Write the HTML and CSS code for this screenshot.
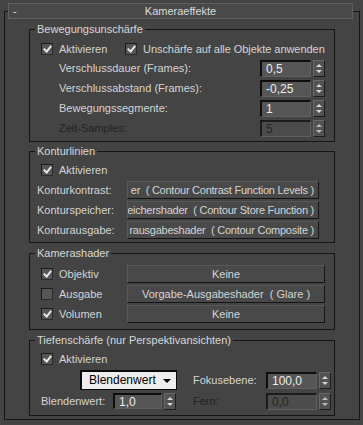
FILE: index.html
```html
<!DOCTYPE html>
<html>
<head>
    <meta charset="utf-8">
    <link rel="stylesheet" href="styles.css">
</head>
<body>
<div class="rollout">
    <div class="rollout-head">
        <span class="minus">-</span>
        <span class="rollout-title">Kameraeffekte</span>
        <span></span>
    </div>
    <div class="rollout-frame">

        <fieldset class="group group-blur">
            <legend>Bewegungsunschärfe</legend>
            <div class="group-body">
                <div class="row check-row">
                    <label class="check check-first"><span class="box on"></span>Aktivieren</label>
                    <label class="check"><span class="box on"></span>Unschärfe auf alle Objekte anwenden</label>
                </div>
                <div class="row field-row">
                    <span class="field-label">Verschlussdauer (Frames):</span>
                    <span class="num">0,5</span><span class="spin"></span>
                </div>
                <div class="row field-row">
                    <span class="field-label">Verschlussabstand (Frames):</span>
                    <span class="num">-0,25</span><span class="spin"></span>
                </div>
                <div class="row field-row">
                    <span class="field-label">Bewegungssegmente:</span>
                    <span class="num">1</span><span class="spin"></span>
                </div>
                <div class="row field-row disabled">
                    <span class="field-label">Zeit-Samples:</span>
                    <span class="num">5</span><span class="spin"></span>
                </div>
            </div>
        </fieldset>

        <fieldset class="group group-contour">
            <legend>Konturlinien</legend>
            <div class="group-body">
                <div class="row check-row">
                    <label class="check"><span class="box on"></span>Aktivieren</label>
                </div>
                <div class="row shader-row">
                    <span class="shader-label">Konturkontrast:</span>
                    <span class="btn clip"><span>er&nbsp; ( Contour Contrast Function Levels )</span></span>
                </div>
                <div class="row shader-row">
                    <span class="shader-label">Konturspeicher:</span>
                    <span class="btn clip"><span>eichershader&nbsp; ( Contour Store Function )</span></span>
                </div>
                <div class="row shader-row">
                    <span class="shader-label">Konturausgabe:</span>
                    <span class="btn clip"><span>rausgabeshader&nbsp; ( Contour Composite )</span></span>
                </div>
            </div>
        </fieldset>

        <fieldset class="group group-camera">
            <legend>Kamerashader</legend>
            <div class="group-body">
                <div class="row cam-row">
                    <label class="check cam-check"><span class="box on"></span>Objektiv</label>
                    <span class="btn">Keine</span>
                </div>
                <div class="row cam-row">
                    <label class="check cam-check"><span class="box"></span>Ausgabe</label>
                    <span class="btn">Vorgabe-Ausgabeshader&nbsp; ( Glare )</span>
                </div>
                <div class="row cam-row">
                    <label class="check cam-check"><span class="box on"></span>Volumen</label>
                    <span class="btn">Keine</span>
                </div>
            </div>
        </fieldset>

        <fieldset class="group group-dof">
            <legend>Tiefenschärfe (nur Perspektivansichten)</legend>
            <div class="group-body">
                <div class="row check-row">
                    <label class="check"><span class="box on"></span>Aktivieren</label>
                </div>
                <div class="dof-grid">
                    <div class="dof-cell dof-drop">
                        <span class="dropdown">Blendenwert<span class="caret"></span></span>
                    </div>
                    <div class="dof-cell">
                        <span class="dof-label">Fokusebene:</span>
                        <span class="num num-wide">100,0</span><span class="spin"></span>
                    </div>
                    <div class="dof-cell dof-left">
                        <span class="dof-label">Blendenwert:</span>
                        <span class="num num-small">1,0</span><span class="spin"></span>
                    </div>
                    <div class="dof-cell disabled">
                        <span class="dof-label">Fern:</span>
                        <span class="num num-wide">0,0</span><span class="spin"></span>
                    </div>
                </div>
            </div>
        </fieldset>

    </div>
</div>
</body>
</html>
```

FILE: styles.css
```css
* {
    margin: 0;
    padding: 0;
    box-sizing: border-box;
}

body {
    background: #444444;
    color: #d4d4d4;
    font-family: "Liberation Sans", Arial, sans-serif;
    font-size: 11px;
    line-height: 13px;
}

.rollout {
    padding-top: 3px;
}

/* title bar sits over the top edge of the frame */
.rollout-head {
    position: relative;
    z-index: 1;
    margin: 0 10px 0 8px;
    height: 16px;
    border: 1px solid #5f5f5f;
    background: #494949;
    display: grid;
    grid-template-columns: 1fr auto 1fr;
    align-items: center;
    color: #dcdcdc;
}

.minus {
    padding-left: 4px;
}

.rollout-frame {
    margin: -8px 3px 0 4px;
    border: 1px solid #161616;
    padding: 11px 0 3px;
}

/* group boxes */
.group {
    border: 1px solid #151515;
    margin: 0 24px;
    padding: 0;
    min-width: 0;
}

.group legend {
    margin-left: 5px;
    padding: 0 2px;
    line-height: 13px;
    color: #d8d8d8;
}

.group-contour { margin-top: 3px; }
.group-camera { margin-top: 4px; }
.group-dof { margin-top: 4px; }

.group-blur .group-body { padding: 4px 9px 3px 0; }
.group-contour .group-body { padding: 2px 15px 2px 0; }
.group-camera .group-body { padding: 4px 9px 5px 0; }
.group-dof .group-body { padding: 2px 3px 4px 0; }

.row {
    display: flex;
    align-items: center;
    height: 20px;
}

.group-blur .check-row { height: 18px; }

/* checkboxes */
.check {
    display: flex;
    align-items: center;
    padding-left: 11px;
    white-space: nowrap;
}

.check-first {
    width: 95px;
}

.group-blur .check + .check {
    padding-left: 0;
    letter-spacing: -0.05px;
}

.box {
    width: 12px;
    height: 12px;
    margin-right: 6px;
    border: 1px solid #1b1b1b;
    border-right-color: #2a2a2a;
    border-bottom-color: #2a2a2a;
    background: #565656;
    position: relative;
}

.box.on::after {
    content: "";
    position: absolute;
    left: 3px;
    top: 0px;
    width: 3px;
    height: 6px;
    border-right: 2px solid #e6e6e6;
    border-bottom: 2px solid #e6e6e6;
    transform: rotate(40deg);
}

/* numeric fields with spinners */
.field-label {
    flex: 1;
    padding-left: 29px;
    white-space: nowrap;
}

.num {
    width: 51px;
    height: 17px;
    padding: 1px 0 0 4px;
    background: #565656;
    border-top: 2px solid #0e0e0e;
    border-left: 2px solid #0e0e0e;
    border-right: 1px solid #606060;
    border-bottom: 1px solid #606060;
    color: #ececec;
    font-size: 12px;
    line-height: 13px;
}

.spin {
    width: 12px;
    height: 17px;
    margin-left: 2px;
    background: #525252;
    border: 1px solid #686868;
    border-right-color: #1c1c1c;
    border-bottom-color: #1c1c1c;
    position: relative;
}

.spin::before,
.spin::after {
    content: "";
    position: absolute;
    left: 2px;
    border-left: 3px solid transparent;
    border-right: 3px solid transparent;
}

.spin::before {
    top: 3px;
    border-bottom: 3px solid #d6d6d6;
}

.spin::after {
    bottom: 3px;
    border-top: 3px solid #d6d6d6;
}

.disabled .field-label,
.disabled .dof-label {
    color: #232323;
}

.disabled .num {
    background: #4c4c4c;
    border-top-color: #1c1c1c;
    border-left-color: #1c1c1c;
    color: #262626;
}

.disabled .spin::before { border-bottom-color: #bdbdbd; }
.disabled .spin::after { border-top-color: #bdbdbd; }

/* shader buttons */
.shader-label {
    width: 97px;
    padding-left: 7px;
    white-space: nowrap;
}

.btn {
    flex: 1;
    height: 18px;
    display: flex;
    align-items: center;
    justify-content: center;
    background: #494949;
    border: 1px solid #595959;
    border-right-color: #151515;
    border-bottom-color: #151515;
    color: #d4d4d4;
    white-space: nowrap;
    overflow: hidden;
}

.btn.clip {
    justify-content: flex-end;
    padding-right: 4px;
}

.btn.clip span {
    letter-spacing: -0.25px;
}

.cam-check {
    width: 97px;
}

/* depth of field */
.dof-grid {
    display: grid;
    grid-template-columns: 147px 1fr;
    grid-template-rows: 22px 20px;
    align-items: center;
}

.dof-cell {
    display: flex;
    align-items: center;
}

.dof-drop {
    padding-left: 50px;
}

.dof-left {
    padding-left: 11px;
}

.dof-label {
    white-space: nowrap;
}

.dof-left .dof-label {
    width: 72px;
}

.dof-cell:nth-child(even) {
    padding-left: 16px;
}

.dof-cell:nth-child(even) .dof-label {
    width: 73px;
}

.num-wide {
    width: 51px;
}

.num-small {
    width: 49px;
    height: 16px;
}

.dropdown {
    width: 97px;
    height: 20px;
    display: flex;
    align-items: center;
    justify-content: space-between;
    padding: 0 5px 0 7px;
    background: #ededed;
    border: 2px solid #0a0a0a;
    border-right-width: 1px;
    border-bottom-width: 1px;
    color: #000;
    font-size: 12px;
}

.caret {
    border-left: 4px solid transparent;
    border-right: 4px solid transparent;
    border-top: 4px solid #000;
}
```
